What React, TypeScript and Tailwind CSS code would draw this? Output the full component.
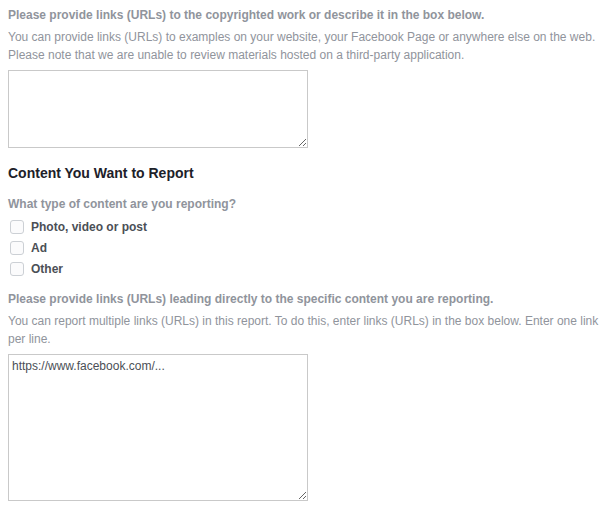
import React from "react";

const font = { fontFamily: '"Liberation Sans", Arial, Helvetica, sans-serif' };

function Checkbox({ label }: { label: string }) {
  return (
    <label className="flex items-center h-[21px] pl-[2px]">
      <span className="w-[14px] h-[14px] rounded-[3px] border border-[#ccd0d5] bg-[#fbfbfc] shrink-0" />
      <span className="ml-[7px] text-[12px] font-bold text-[#4b4f56] leading-4">{label}</span>
    </label>
  );
}

export default function App() {
  return (
    <div style={font} className="bg-white w-[607px] h-[511px] pl-2 pr-1 pt-[7px] overflow-hidden">
      <div className="text-[12px] font-bold text-[#90949c] leading-4">
        Please provide links (URLs) to the copyrighted work or describe it in the box below.
      </div>
      <p className="mt-[5px] text-[12px] text-[#90949c] leading-[18px]">
        You can provide links (URLs) to examples on your website, your Facebook Page or anywhere else on the web.
        <br />
        Please note that we are unable to review materials hosted on a third-party application.
      </p>
      <textarea className="block mt-[6px] w-[300px] h-[78px] border border-[#c9c9c9] bg-white outline-none" />

      <h2 className="mt-[16px] text-[14px] font-bold text-[#1d2129] leading-[18px]">Content You Want to Report</h2>
      <div className="mt-[14px] text-[12px] font-bold text-[#90949c] leading-4">What type of content are you reporting?</div>
      <div className="mt-[4px] flex flex-col">
        <Checkbox label="Photo, video or post" />
        <Checkbox label="Ad" />
        <Checkbox label="Other" />
      </div>

      <div className="mt-[12px] text-[12px] font-bold text-[#90949c] leading-4">
        Please provide links (URLs) leading directly to the specific content you are reporting.
      </div>
      <p className="mt-[5px] text-[12px] text-[#90949c] leading-[18px]">
        You can report multiple links (URLs) in this report. To do this, enter links (URLs) in the box below. Enter one link per line.
      </p>
      <textarea
        defaultValue="https://www.facebook.com/..."
        className="block mt-[6px] w-[300px] h-[147px] border border-[#c9c9c9] bg-white px-[3px] py-[3px] text-[12px] text-[#4b4f56] leading-4 outline-none"
        style={font}
      />
    </div>
  );
}
